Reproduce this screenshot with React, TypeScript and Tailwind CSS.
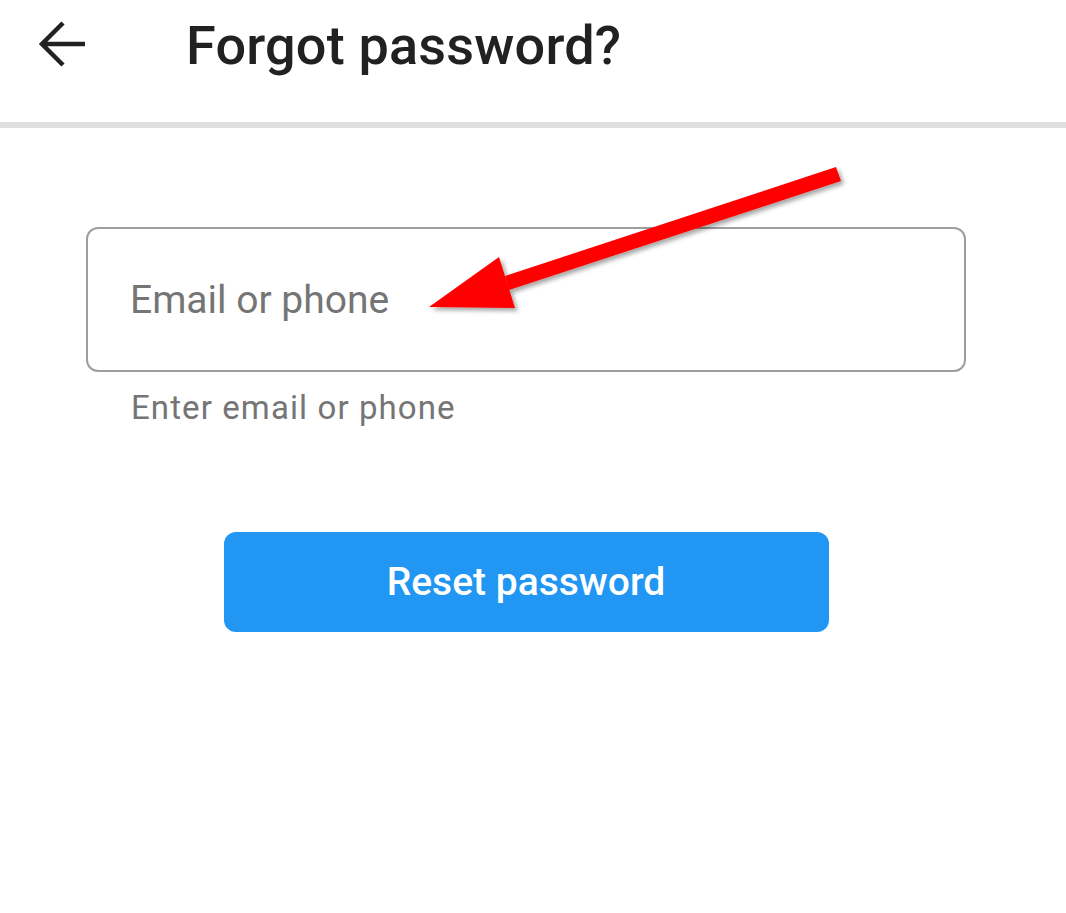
import React, { useState } from "react";

const BackArrow: React.FC = () => (
  <svg width="48" height="48" viewBox="0 0 48 48" className="block overflow-visible">
    <path
      d="M47 22 H4 M25 1 L4 22 L25 43"
      fill="none"
      stroke="#212121"
      strokeWidth="4.5"
      strokeLinejoin="miter"
    />
  </svg>
);

// red annotation arrow pointing at the input
const RedArrow: React.FC = () => (
  <svg
    className="absolute left-0 top-0 pointer-events-none"
    width="1066"
    height="913"
    viewBox="0 0 1066 913"
  >
    <defs>
      <filter id="shadow" x="-10%" y="-10%" width="120%" height="130%">
        <feDropShadow dx="3" dy="3" stdDeviation="2" floodColor="#000" floodOpacity="0.35" />
      </filter>
    </defs>
    <g filter="url(#shadow)" fill="#ff0000">
      <polygon points="836,167 841,181 509,290 505,276" />
      <polygon points="429,307 499,257 515,308" />
    </g>
  </svg>
);

const App: React.FC = () => {
  const [value, setValue] = useState("");

  return (
    <div
      className="relative w-[1066px] h-[913px] bg-white overflow-hidden"
      style={{ fontFamily: "Roboto, 'Noto Sans', sans-serif" }}
    >
      <header className="h-[128px] flex items-start border-b-[6px] border-[#e0e0e0]">
        <button className="mt-[22px] ml-[38px] w-[48px] h-[48px]">
          <BackArrow />
        </button>
        <h1 className="ml-[100px] mt-[14px] text-[54px] leading-[64px] font-medium text-[#212121] tracking-[0.2px]">
          Forgot password?
        </h1>
      </header>

      <div className="ml-[86px] w-[880px] pt-[99px]">
        <input
          type="text"
          value={value}
          onChange={(e) => setValue(e.target.value)}
          placeholder="Email or phone"
          className="w-full h-[145px] border-2 border-[#9e9e9e] rounded-[12px] px-[42px] text-[39px] text-[#212121] placeholder:text-[#757575] outline-none"
        />
        <p className="ml-[45px] mt-[18px] text-[33px] leading-[36px] text-[#757575] tracking-[1.1px]">
          Enter email or phone
        </p>

        <div className="flex justify-center mt-[106px]">
          <button
            type="button"
            className="w-[605px] h-[100px] rounded-[12px] bg-[#2196f3] text-white text-[39px] font-medium"
          >
            Reset password
          </button>
        </div>
      </div>

      <RedArrow />
    </div>
  );
};

export default App;
